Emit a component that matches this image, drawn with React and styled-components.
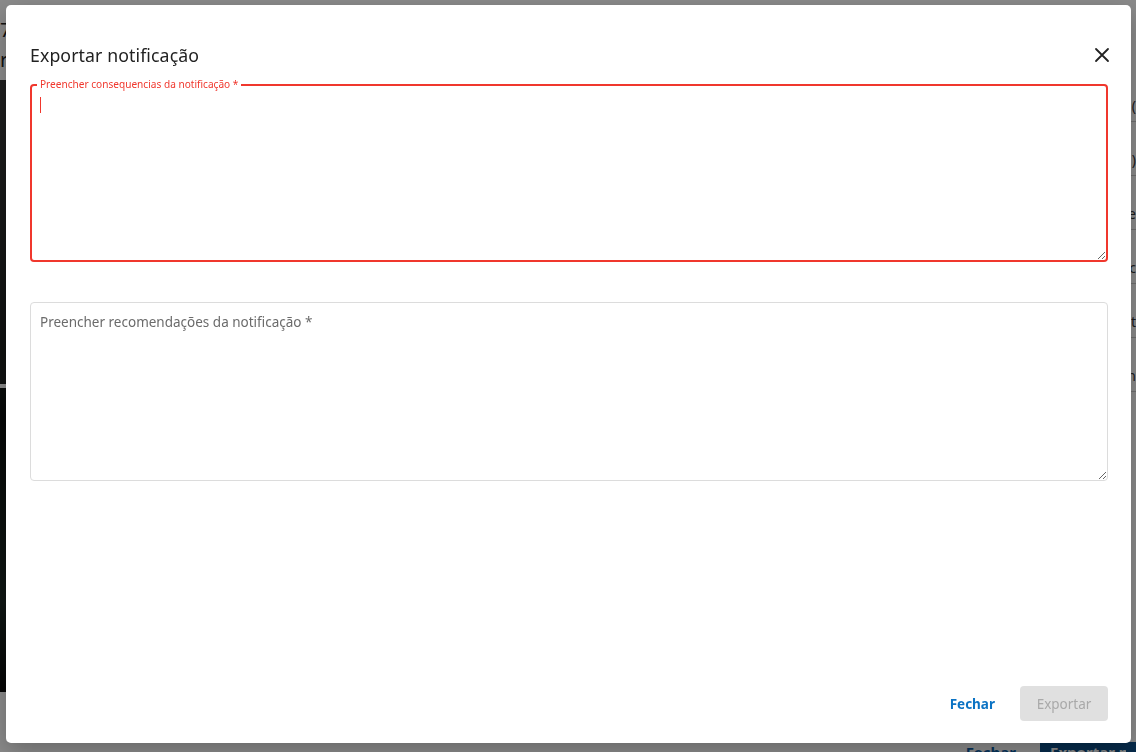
import React from 'react';
import styled, { createGlobalStyle } from 'styled-components';

const GlobalStyle = createGlobalStyle`
  html, body {
    margin: 0;
    padding: 0;
    width: 1136px;
    height: 752px;
    overflow: hidden;
    background: #ffffff;
    font-family: "Noto Sans", "Open Sans", sans-serif;
  }
  * { box-sizing: border-box; }
`

// underlying page (only its edges show around the dialog)
const Page = styled.div`
  width: 1136px;
  height: 752px;
  overflow: hidden;
  display: flex;
  flex-direction: column;
  background: #fff;
  color: #222;
`
const PageTop = styled.div`
  flex-shrink: 0;
  height: 80px;
  padding: 18px 0 0 0;
  display: flex;
  flex-direction: column;
  gap: 6px;
  font-size: 20px;
  line-height: 24px;
`
const PageBody = styled.div`
  flex-shrink: 0;
  height: 612px;
  display: flex;
`
const Media = styled.div`
  width: 420px;
  display: flex;
  flex-direction: column;
  gap: 4px;
`
const MediaShot = styled.div`
  flex: ${p => p.grow};
  background: ${p => p.bg};
`
const Details = styled.div`
  flex: 1;
  display: flex;
  flex-direction: column;
  align-items: flex-end;
  padding-top: 10px;
  gap: 22px;
  font-size: 14px;
  color: #333;
`
const DetailLine = styled.div`
  width: 100%;
  border-bottom: 1px solid #ccc;
  padding: 6px 0;
  text-align: right;
`
const PageFooter = styled.div`
  flex-shrink: 0;
  display: flex;
  justify-content: flex-end;
  align-items: flex-start;
  gap: 8px;
  padding-top: 50px;
  padding-right: 0;
`
const PageButton = styled.div`
  height: 30px;
  padding: 0 ${p => (p.filled ? 10 : 16)}px;
  font-size: 15px;
  line-height: 20px;
  font-weight: 700;
  white-space: nowrap;
  color: ${p => (p.filled ? '#fff' : '#0b5ea8')};
  background: ${p => (p.filled ? '#0b4f8a' : 'transparent')};
`
const PageButtonText = styled.span`
  display: inline-block;
  width: 76px;
  overflow: hidden;
`

// dialog
const Backdrop = styled.div`
  position: fixed;
  inset: 0;
  background: rgba(0, 0, 0, 0.46);
  display: flex;
  padding: 5px 5px 9px 6px;
`
const Dialog = styled.div`
  width: 1125px;
  height: 738px;
  background: #fff;
  border-radius: 5px;
  box-shadow: 0 8px 24px rgba(0, 0, 0, 0.25);
  display: flex;
  flex-direction: column;
  padding: 0 23px 22px 24px;
`
const Header = styled.div`
  height: 79px;
  display: flex;
  align-items: center;
  justify-content: space-between;
  padding-top: 28px;
  padding-bottom: 7px;
`
const Title = styled.h2`
  margin: 0;
  font-size: 17.7px;
  font-weight: 400;
  color: #222;
  letter-spacing: 0.1px;
`
const CloseButton = styled.button`
  border: none;
  background: transparent;
  padding: 0;
  margin-right: -6px;
  width: 24px;
  height: 24px;
  display: flex;
  align-items: center;
  justify-content: center;
  cursor: pointer;
`
const Field = styled.div`
  position: relative;
  margin-bottom: ${p => p.gap || 0}px;
`
const TextArea = styled.textarea`
  display: block;
  width: 100%;
  height: ${p => p.h}px;
  resize: vertical;
  border-radius: 4px;
  border: ${p => (p.error ? '2px solid #f0372d' : '1px solid #dcdcdc')};
  padding: ${p => (p.error ? '10px 8px' : '10px 9px')};
  font-family: "Noto Sans", "Open Sans", sans-serif;
  font-size: 13.5px;
  line-height: 18px;
  color: #222;
  outline: none;
  &::placeholder {
    color: #6b6b6b;
  }
`
const FloatLabel = styled.span`
  position: absolute;
  left: 7px;
  top: -6px;
  padding: 0 3px;
  background: #fff;
  font-size: 10.1px;
  line-height: 13px;
  color: #f0372d;
`
const Caret = styled.span`
  position: absolute;
  left: 10px;
  top: 13px;
  width: 1px;
  height: 16px;
  background: #f0372d;
`
const Footer = styled.div`
  margin-top: auto;
  display: flex;
  justify-content: flex-end;
  align-items: center;
  gap: 17px;
`
const TextButton = styled.button`
  border: none;
  background: transparent;
  padding: 8px 8px;
  font-family: "Noto Sans", "Open Sans", sans-serif;
  font-size: 13.5px;
  font-weight: 700;
  color: #0b73c4;
  cursor: pointer;
`
const SolidButton = styled.button`
  border: none;
  border-radius: 4px;
  width: 88px;
  height: 35px;
  background: #e0e0e0;
  font-family: "Noto Sans", "Open Sans", sans-serif;
  font-size: 13.5px;
  color: #a9a9a9;
`

export default function App() {
  return (
    <>
      <GlobalStyle />
      <Page>
        <PageTop>
          <span>7</span>
          <span>r</span>
        </PageTop>
        <PageBody>
          <Media>
            <MediaShot grow={5} bg="linear-gradient(160deg, #3a3a3a, #1c1f1e 60%, #2a2d2c)" />
            <MediaShot grow={5} bg="linear-gradient(200deg, #2d3a36, #0c0f0e 40%, #1d2a25 80%, #080808)" />
          </Media>
          <Details>
            <DetailLine>(</DetailLine>
            <DetailLine>)</DetailLine>
            <DetailLine>e</DetailLine>
            <DetailLine>c</DetailLine>
            <DetailLine>t</DetailLine>
            <DetailLine>n</DetailLine>
          </Details>
        </PageBody>
        <PageFooter>
          <PageButton>Fechar</PageButton>
          <PageButton filled><PageButtonText>Exportar not</PageButtonText></PageButton>
        </PageFooter>
      </Page>

      <Backdrop>
        <Dialog>
          <Header>
            <Title>Exportar notificação</Title>
            <CloseButton aria-label="Fechar">
              <svg width="16" height="16" viewBox="0 0 16 16">
                <path d="M2 2 L14 14 M14 2 L2 14" stroke="#222" strokeWidth="1.8" strokeLinecap="round" />
              </svg>
            </CloseButton>
          </Header>
          <Field gap={40}>
            <TextArea error h={178} />
            <FloatLabel>Preencher consequencias da notificação *</FloatLabel>
            <Caret />
          </Field>
          <Field>
            <TextArea h={179} placeholder="Preencher recomendações da notificação *" />
          </Field>
          <Footer>
            <TextButton>Fechar</TextButton>
            <SolidButton disabled>Exportar</SolidButton>
          </Footer>
        </Dialog>
      </Backdrop>
    </>
  );
}
